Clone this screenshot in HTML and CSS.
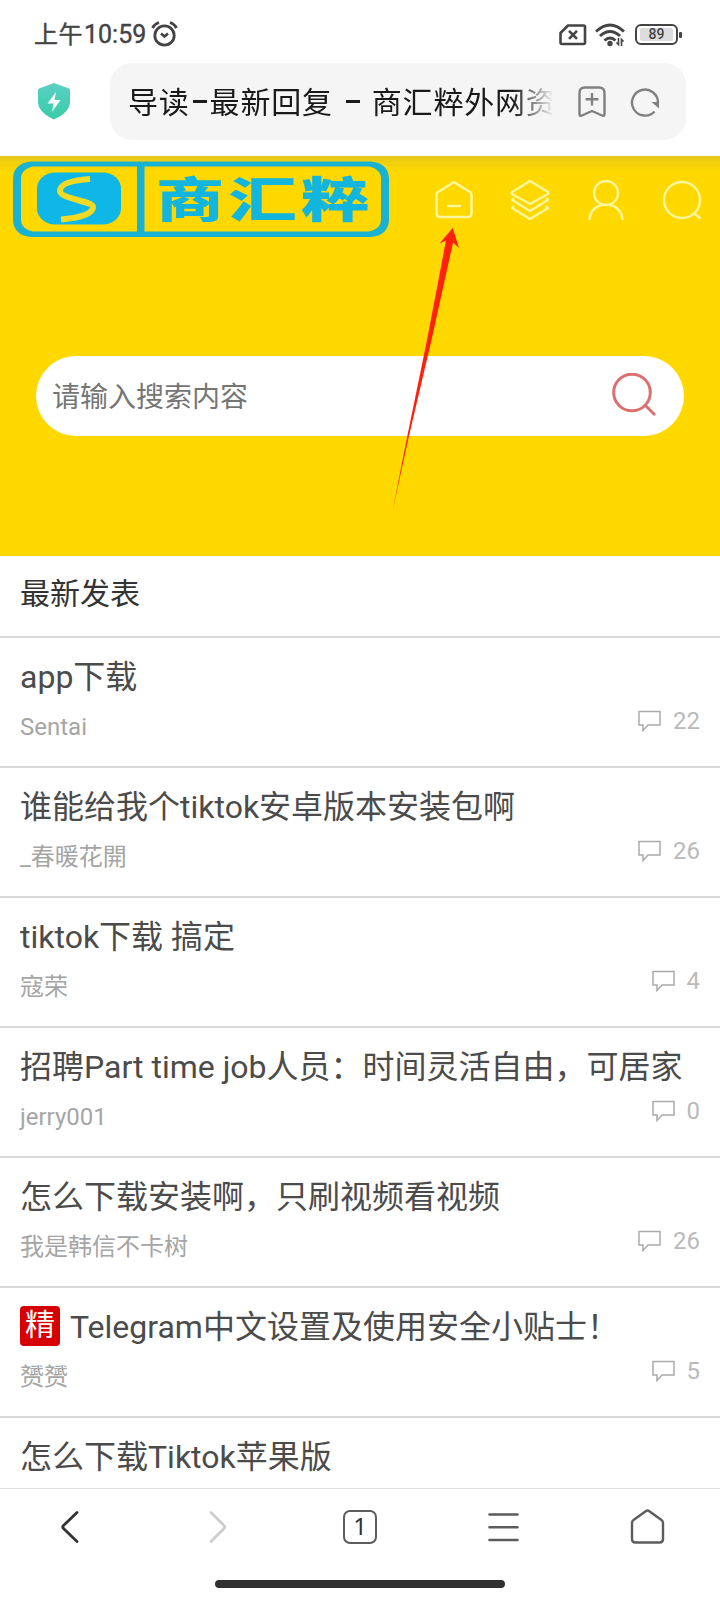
FILE: index.html
```html
<!DOCTYPE html>
<html lang="zh-CN">
<head>
<meta charset="utf-8">
<title>导读-最新回复</title>
<link rel="stylesheet" href="styles.css">
</head>
<body>
<div class="phone">
  <div class="status">
    <span class="clock"><span class="clock-cn">上午</span><span>10:59</span></span>
    <svg class="alarm" width="28" height="28" viewBox="0 0 28 28" fill="none" stroke="#444" stroke-width="2.8">
      <circle cx="13.500" cy="15.500" r="9.700"/><path d="M1.500 8Q3.500 4 8 2.500M25.500 8Q23.500 4 19 2.500"/><path d="M10 13.500l3.500 3l3.500-3"/>
    </svg>
    <span class="spacer"></span>
    <svg class="sim" width="28" height="22" viewBox="0 0 28 22" fill="none" stroke="#444" stroke-width="2.600" stroke-linejoin="round">
      <path d="M9 1.500H24.500Q26 1.500 26 3V18.500Q26 20 24.500 20H3Q1.500 20 1.500 18.500V9Z"/><path d="M10 6.800l8 8M18 6.800l-8 8"/>
    </svg>
    <svg class="wifi" width="30" height="24" viewBox="0 0 30 24" fill="none" stroke="#444" stroke-width="3">
      <path d="M1 8.500Q15-4.500 29 8.500M5 13Q15 4 25 13M9.500 17.500Q15 12.500 20.500 17.500"/><circle cx="15" cy="20.500" r="1.200" /><path stroke-width="1.600" d="M23.500 15v6.500l-2-2M26.500 23v-6.500l2 2"/>
    </svg>
    <span class="battery"><span class="battery-level">89</span></span><span class="battery-cap"></span>
  </div>

  <div class="address">
    <svg class="shield" width="34" height="38" viewBox="0 0 34 38">
      <defs><linearGradient id="mint" x1="0" y1="0" x2="0" y2="1"><stop offset="0" stop-color="#5ccfc4"/><stop offset="1" stop-color="#36cda8"/></linearGradient></defs>
      <path fill="url(#mint)" d="M17 1L32 6.500Q33 7 33 8V20Q33 30 17 37.500Q1 30 1 20V8Q1 7 2 6.500Z"/>
      <path fill="#fff" d="M19 10L10.500 21.500h6L15 30L23.500 18h-6Z"/>
    </svg>
    <div class="url">
      <span class="url-text">导读<i class="dash"></i>最新回复<i class="dash wide"></i>商汇粹外网资</span>
      <svg class="bookmark" width="28" height="32" viewBox="0 0 28 32" fill="none" stroke="#808080" stroke-width="2.400" stroke-linejoin="round">
        <path d="M1.500 7Q1.500 1.500 7 1.500H21Q26.500 1.500 26.500 7V28Q26.500 30.500 24 29.500L14 25L4 29.500Q1.500 30.500 1.500 28Z"/><path d="M14 7v12.500M7.500 13.200h13"/>
      </svg>
      <svg class="reload" width="30" height="30" viewBox="0 0 30 30">
        <path fill="none" stroke="#808080" stroke-width="2.400" d="M24.500 24.500A13 13 0 1 1 28 16"/><path fill="#808080" d="M21.500 15h7.500v6.500Z"/>
      </svg>
    </div>
  </div>

  <header class="hero">
    <div class="hero-bar">
      <svg class="logo" width="376" height="76" viewBox="0 0 376 76">
        <path fill="#18b2d3" fill-rule="evenodd" d="M18 0.500H358Q376 2.500 376 18V58Q376 74 358 76H18Q0 74 0 58V18Q0 2.500 18 0.500ZM20 5.500Q8 8 8 18V58Q8 68 20 70.500H124V5.500ZM131.500 5.500V70.500H356Q368 68 368 58V18Q368 8 356 5.500Z"/>
        <rect x="24" y="11.500" width="84" height="52" rx="18" ry="16" fill="#0eb7e6"/>
        <path fill="none" stroke="#f0da25" stroke-width="6" d="M77 18Q47 20 47 30C47 38 80 40 80 46C80 53 66 57 48 58.500"/>
        <text class="logo-text" transform="translate(143 56) scale(1.420 1)">商汇粹</text>
      </svg>
      <nav class="hero-nav">
        <svg width="40" height="40" viewBox="0 0 40 40"><path d="M19.300 2.500Q20 2 20.700 2.500L36 12Q37.500 13 37.500 15V33Q37.500 37 34 37H6Q2.500 37 2.500 33V15Q2.500 13 4 12Z"/><path d="M13 26h14"/></svg>
        <svg width="40" height="40" viewBox="0 0 40 40"><path d="M20 1L38 12Q39 13 38 14L20 24L2 14Q1 13 2 12ZM4 18L2 20L20 31L38 20L36 18M4 26L2 28L20 39L38 28L36 26"/></svg>
        <svg width="40" height="40" viewBox="0 0 40 40"><circle cx="20" cy="13" r="12"/><path d="M3.500 40C4 19.500 36 19.500 36.500 40"/></svg>
        <svg width="40" height="40" viewBox="0 0 40 40"><circle cx="20" cy="20" r="18"/><path d="M32 33l6.500 5.500"/></svg>
      </nav>
    </div>
    <div class="search">
      <span>请输入搜索内容</span>
      <svg width="44" height="44" viewBox="0 0 44 44" fill="none" stroke="#dc7070" stroke-width="3"><circle cx="20" cy="19.500" r="18.300"/><path d="M33 32L43 42"/></svg>
    </div>
    <svg class="pointer" width="70" height="286" viewBox="390 226 70 286"><path fill="#ff210c" d="M452.700 228L459 248L453 242.500L431.500 340L409 436L392.500 511L407.300 436L427 340L446 240.500L439.500 243.500Z"/></svg>
  </header>

  <main class="feed">
    <h1 class="section">最新发表</h1>
    <article class="row"><div class="main"><h2>app下载</h2><p>Sentai</p></div><div class="count"><svg class="bubble" viewBox="0 0 24 22"><path d="M1 1.500H22V15H10L5 20.500V15H1Z"/></svg>22</div></article>
    <article class="row"><div class="main"><h2>谁能给我个tiktok安卓版本安装包啊</h2><p>_春暖花開</p></div><div class="count"><svg class="bubble" viewBox="0 0 24 22"><path d="M1 1.500H22V15H10L5 20.500V15H1Z"/></svg>26</div></article>
    <article class="row"><div class="main"><h2>tiktok下载 搞定</h2><p>寇荣</p></div><div class="count"><svg class="bubble" viewBox="0 0 24 22"><path d="M1 1.500H22V15H10L5 20.500V15H1Z"/></svg>4</div></article>
    <article class="row"><div class="main"><h2>招聘Part time job人员：时间灵活自由，可居家</h2><p>jerry001</p></div><div class="count"><svg class="bubble" viewBox="0 0 24 22"><path d="M1 1.500H22V15H10L5 20.500V15H1Z"/></svg>0</div></article>
    <article class="row"><div class="main"><h2>怎么下载安装啊，只刷视频看视频</h2><p>我是韩信不卡树</p></div><div class="count"><svg class="bubble" viewBox="0 0 24 22"><path d="M1 1.500H22V15H10L5 20.500V15H1Z"/></svg>26</div></article>
    <article class="row"><div class="main"><h2><span class="badge">精</span>Telegram中文设置及使用安全小贴士！</h2><p>赟赟</p></div><div class="count"><svg class="bubble" viewBox="0 0 24 22"><path d="M1 1.500H22V15H10L5 20.500V15H1Z"/></svg>5</div></article>
    <article class="row"><div class="main"><h2>怎么下载Tiktok苹果版</h2></div></article>
  </main>

  <footer class="toolbar">
    <div class="tabs">
      <svg width="36" height="36" viewBox="0 0 36 36" stroke="#333" stroke-width="2.800"><path d="M23 3.500L9.500 16.500Q8 18 9.500 19.500L23 32.500"/></svg>
      <svg width="36" height="36" viewBox="0 0 36 36" stroke="#ccc" stroke-width="2.600"><path d="M13 3.500L26 16.500Q27.500 18 26 19.500L13 32.500"/></svg>
      <span class="tab-count">1</span>
      <svg width="36" height="36" viewBox="0 0 36 36" stroke="#5c5c5c" stroke-width="2.600"><path d="M3.500 5.500h28M3.500 18.200h28M3.500 31h28"/></svg>
      <svg class="home" width="36" height="36" viewBox="0 0 36 36" stroke="#5c5c5c" stroke-width="2.400"><path d="M15.700 2.200Q17.500 .9 19.300 2.200L31.500 11Q33 12 33 14V30Q33 33.500 29.500 33.500H5.500Q2 33.500 2 30V14Q2 12 3.500 11Z"/></svg>
    </div>
    <div class="handle"></div>
  </footer>
</div>
</body>
</html>
```
FILE: styles.css
```css
* { box-sizing: border-box; }
body { margin: 0; background: #fff; font-family: Roboto, "Noto Sans CJK SC", sans-serif; }
h1, h2, p { margin: 0; font-weight: 400; }
svg { display: block; flex: none; }
.phone { width: 720px; height: 1600px; display: flex; flex-direction: column; overflow: hidden; background: #fff; }

.status { flex: none; height: 63px; padding: 7px 38px 0 34px; display: flex; align-items: center; color: #444; }
.clock { display: flex; align-items: center; font-size: 25px; line-height: 30px; width: 117px; white-space: nowrap; -webkit-text-stroke: .4px #444; }
.clock-cn { font-size: 24px; letter-spacing: .5px; margin-right: 1px; }
.alarm { margin-top: -3px; }
.spacer { flex: 1; }
.sim { margin-right: 8px; }
.wifi { margin-right: 10px; }
.battery { width: 43px; height: 21px; margin-top: -2px; border: 2.5px solid #444; border-radius: 6px; padding: 2px 3px; display: flex; }
.battery-level { flex: 1; background: #ddd; font-size: 14px; font-weight: 500; line-height: 13px; text-align: center; border-radius: 2px; }
.battery-cap { width: 3px; height: 6px; margin: -1px 0 0 1px; background: #444; border-radius: 1px; }

.address { flex: none; height: 93px; display: flex; align-items: flex-start; padding: 0 34px 0 37px; }
.shield { margin: 19px 39px 0 0; }
.url { flex: 1; height: 77px; border-radius: 22px; background: #f5f5f5; display: flex; align-items: center; padding: 0 26px 0 18px; }
.url-text { width: 424px; height: 46px; margin-top: -3px; line-height: 46px; display: flex; align-items: center; white-space: nowrap; font-family: "Noto Sans CJK SC", sans-serif; font-size: 30px; letter-spacing: .8px; color: #1a1a1a; -webkit-mask-image: linear-gradient(90deg, #000 385px, transparent 426px); mask-image: linear-gradient(90deg, #000 385px, transparent 426px); }
.dash { flex: none; width: 14px; height: 2.5px; margin: 3px 3px 0; background: #1a1a1a; }
.dash.wide { margin: 3px 12px 0 13px; }
.bookmark { margin-left: 26px; }
.reload { margin-left: 24px; }

.hero { position: relative; flex: none; height: 400px; background: linear-gradient(#e6c71b, #f0cf0c 6px, #ffd800 16px); }
.hero-bar { display: flex; padding: 5px 18px 0 13px; }
.logo-text { font-family: "Noto Sans CJK SC", sans-serif; font-weight: 900; font-size: 48px; letter-spacing: 3px; fill: #12b5dd; }
.hero-nav { flex: 1; display: flex; justify-content: space-between; padding: 19px 0 0 45px; }
.hero-nav svg { fill: none; stroke: #fff7a0; stroke-width: 2.4; stroke-linejoin: round; }
.search { margin: 119px 36px 0; height: 80px; border-radius: 40px; background: #fff; display: flex; align-items: center; justify-content: space-between; padding: 0 28px 2px 16px; font-size: 28px; color: #757575; }
.pointer { position: absolute; left: 390px; top: 70px; }

.feed { flex: 1; min-height: 0; overflow: hidden; }
.section { height: 82px; padding: 16px 20px 0; border-bottom: 2px solid #d9d9d9; font-size: 30px; line-height: 44px; color: #333; }
.row { height: 130px; padding: 16px 20px 0; border-bottom: 2px solid #d9d9d9; display: flex; justify-content: space-between; }
.main { flex: none; }
.row h2 { font-size: 32px; line-height: 46px; height: 46px; color: #4b4b4b; white-space: nowrap; display: flex; align-items: center; }
.row p { margin-top: 11px; font-size: 24px; line-height: 32px; color: #a5a5a5; }
.badge { flex: none; width: 40px; height: 40px; margin: -2px 10px 0 0; border-radius: 4px; background: #d60000; color: #fff; font-size: 30px; line-height: 38px; text-align: center; }
.count { margin: 50px 0 0 -60px; display: flex; align-items: center; height: 34px; font-size: 24px; color: #bababa; }
.bubble { width: 24px; height: 22px; margin-right: 11px; fill: none; stroke: #aaa; stroke-width: 1.5; }

.toolbar { flex: none; height: 112px; border-top: 1px solid #dedede; background: #fff; }
.tabs { display: grid; grid-template-columns: repeat(5, 1fr); justify-items: center; align-items: center; height: 76px; }
.tabs svg { fill: none; stroke-linecap: round; stroke-linejoin: round; }
.tab-count { width: 34px; height: 34px; border: 2px solid #5c5c5c; border-radius: 7px; font: 24px/28px "Noto Sans", sans-serif; text-align: center; color: #333; }
.handle { width: 290px; height: 8px; margin: 15px auto 0; border-radius: 4px; background: #303030; }
```
